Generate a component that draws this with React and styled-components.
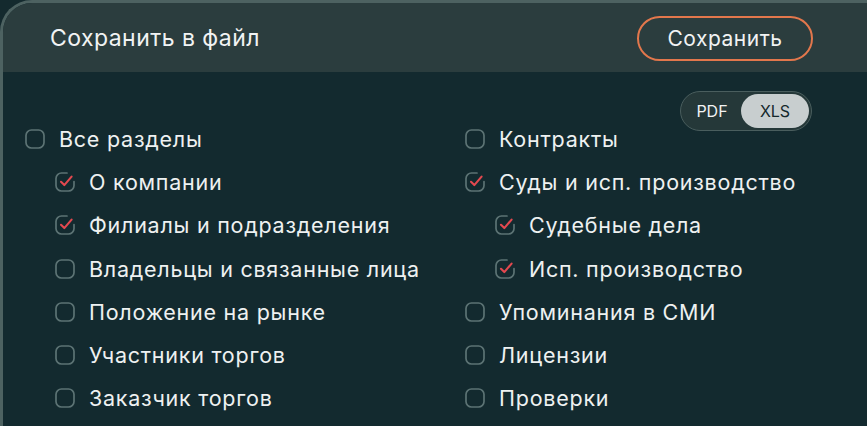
import React, { useState } from "react";
import styled, { createGlobalStyle } from "styled-components";

const GlobalStyle = createGlobalStyle`
  html, body {
    margin: 0;
    padding: 0;
    background: #142a2e;
    font-family: Inter, "Noto Sans", sans-serif;
    overflow: hidden;
  }
`;

const left = [
  { label: "Все разделы", level: 0, checked: false },
  { label: "О компании", level: 1, checked: true },
  { label: "Филиалы и подразделения", level: 1, checked: true },
  { label: "Владельцы и связанные лица", level: 1, checked: false },
  { label: "Положение на рынке", level: 1, checked: false },
  { label: "Участники торгов", level: 1, checked: false },
  { label: "Заказчик торгов", level: 1, checked: false },
];

const right = [
  { label: "Контракты", level: 0, checked: false },
  { label: "Суды и исп. производство", level: 0, checked: true },
  { label: "Судебные дела", level: 1, checked: true },
  { label: "Исп. производство", level: 1, checked: true },
  { label: "Упоминания в СМИ", level: 0, checked: false },
  { label: "Лицензии", level: 0, checked: false },
  { label: "Проверки", level: 0, checked: false },
];

function CheckIcon({ checked }) {
  if (!checked) {
    return (
      <svg width="20" height="20" viewBox="0 0 20 20" fill="none">
        <rect x="1" y="1" width="18" height="18" rx="5.5" stroke="#5c7374" strokeWidth="1.7" />
      </svg>
    );
  }
  return (
    <svg width="20" height="20" viewBox="0 0 20 20" fill="none">
      <path
        d="M19 9.5V13.5C19 16.5 16.5 19 13.5 19H6.5C3.5 19 1 16.5 1 13.5V6.5C1 3.5 3.5 1 6.5 1H12"
        stroke="#5c7374"
        strokeWidth="1.7"
        strokeLinecap="round"
      />
      <path
        d="M6 9.8L9.3 13.1L16.6 4.6"
        stroke="#e2484f"
        strokeWidth="2.1"
        strokeLinecap="round"
        strokeLinejoin="round"
      />
    </svg>
  );
}

export default function App() {
  const [format, setFormat] = useState("XLS");
  return (
    <>
      <GlobalStyle />
      <Card>
        <Header>
          <Title>Сохранить в файл</Title>
          <SaveButton>Сохранить</SaveButton>
        </Header>
        <Body>
          <ToggleRow>
            <Toggle>
              {["PDF", "XLS"].map((f) => (
                <ToggleItem key={f} active={f === format} onClick={() => setFormat(f)}>
                  {f}
                </ToggleItem>
              ))}
            </Toggle>
          </ToggleRow>
          <Columns>
            {[left, right].map((col, i) => (
              <Column key={i}>
                {col.map((item) => (
                  <Row key={item.label} level={item.level}>
                    <CheckIcon checked={item.checked} />
                    <Label>{item.label}</Label>
                  </Row>
                ))}
              </Column>
            ))}
          </Columns>
        </Body>
      </Card>
    </>
  );
}

const Card = styled.div`
  width: 900px;
  height: 440px;
  border-top: 3px solid #4d6261;
  border-left: 3px solid #4d6261;
  border-top-left-radius: 32px;
  overflow: hidden;
  background: #132a2f;
`;

const Header = styled.div`
  height: 69px;
  background: #2b3d3e;
  display: flex;
  align-items: center;
  justify-content: space-between;
  padding: 0 90px 0 47px;
`;

const Title = styled.h2`
  margin: 0;
  font-size: 23px;
  font-weight: 400;
  color: #f1f3f3;
  letter-spacing: 0.45px;
`;

const SaveButton = styled.button`
  width: 176px;
  height: 45px;
  border: 2px solid #e2774c;
  border-radius: 23px;
  background: transparent;
  color: #f1f3f3;
  font-family: inherit;
  font-size: 21px;
  letter-spacing: 0.5px;
  margin-top: 2px;
  cursor: pointer;
`;

const Body = styled.div`
  padding: 19px 0 0 22px;
`;

const ToggleRow = styled.div`
  display: flex;
  justify-content: flex-end;
  padding-right: 91px;
  margin-bottom: -14px;
`;

const Toggle = styled.div`
  display: flex;
  align-items: center;
  width: 132px;
  height: 40px;
  box-sizing: border-box;
  padding: 2px;
  border: 1px solid #4a5e5e;
  border-radius: 20px;
  background: #253839;
`;

const ToggleItem = styled.div`
  flex: ${(p) => (p.active ? "0 0 68px" : "1")};
  height: 100%;
  display: flex;
  align-items: center;
  justify-content: center;
  border-radius: 18px;
  font-size: 16px;
  color: ${(p) => (p.active ? "#15282c" : "#f1f3f3")};
  background: ${(p) => (p.active ? "#c8cecf" : "transparent")};
  cursor: pointer;
`;

const Columns = styled.div`
  display: grid;
  grid-template-columns: 440px 1fr;
`;

const Column = styled.div`
  display: flex;
  flex-direction: column;
`;

const Row = styled.div`
  height: 43.3px;
  display: flex;
  align-items: center;
  gap: 14px;
  padding-left: ${(p) => p.level * 30}px;
`;

const Label = styled.span`
  font-size: 21.5px;
  letter-spacing: 0.75px;
  color: #eef1f1;
  white-space: nowrap;
`;
